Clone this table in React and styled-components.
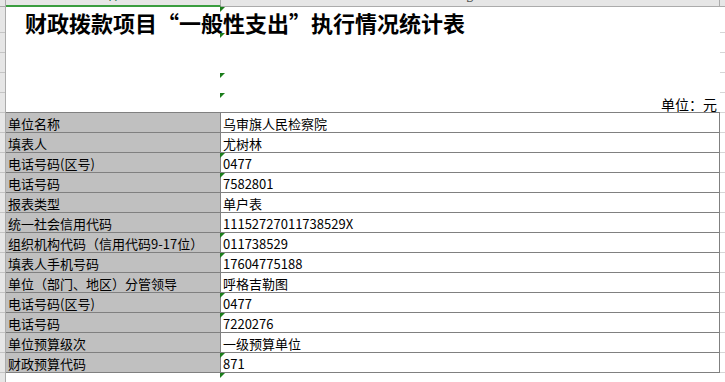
import React from 'react'
import styled, { createGlobalStyle } from 'styled-components'

const GlobalStyle = createGlobalStyle`
  html, body {
    margin: 0;
    padding: 0;
    background: #fff;
  }
  body {
    font-family: "Noto Sans CJK SC", "Liberation Sans", sans-serif;
  }
`

const Sheet = styled.div`
  width: 725px;
  height: 382px;
  overflow: hidden;
  display: flex;
  flex-direction: column;
  background: #fff;
`

const ColumnBar = styled.div`
  display: flex;
  height: 7px;
  flex: none;
`

const Corner = styled.div`
  width: 6px;
  box-sizing: border-box;
  background: #e6e6e6;
  border-right: 1px solid #ababab;
  border-bottom: 1px solid #ababab;
`

const ColHead = styled.div`
  width: ${p => p.$w}px;
  flex: none;
  box-sizing: border-box;
  background: #e6e6e6;
  border-bottom: ${p => (p.$active ? '2px solid #3a9d3f' : '1px solid #ababab')};
  border-right: ${p => (p.$last ? 'none' : '1px solid #ababab')};
  display: flex;
  justify-content: center;
  align-items: flex-end;
  padding-bottom: 2px;
  overflow: hidden;
  font: 11px/11px "Liberation Sans", sans-serif;
  color: ${p => (p.$active ? '#217346' : '#555')};
`

const Body = styled.div`
  display: flex;
  flex: 1;
  min-height: 0;
`

const RowHeaders = styled.div`
  width: 6px;
  flex: none;
  box-sizing: border-box;
  display: flex;
  flex-direction: column;
  background: #e6e6e6;
  border-right: 1px solid #ababab;
`

const Gutter = styled.div`
  width: 5px;
  flex: none;
  display: flex;
  flex-direction: column;
`

const Tick = styled.div`
  height: ${p => p.$h}px;
  flex: none;
  box-sizing: border-box;
  border-bottom: 1px solid ${p => p.$color};
`

const Main = styled.div`
  width: 714px;
  flex: none;
  display: flex;
  flex-direction: column;
`

const TitleBlock = styled.div`
  position: relative;
  height: 106px;
  flex: none;
  box-sizing: border-box;
  border-bottom: 1px solid #808080;
  display: flex;
  flex-direction: column;
  justify-content: space-between;
  padding: 4px 3px 1px 19px;
`

const Title = styled.h1`
  margin: 0;
  font-size: 22px;
  line-height: 22px;
  font-weight: 700;
  color: #000;
  white-space: nowrap;
`

const Unit = styled.div`
  align-self: flex-end;
  font-size: 14px;
  line-height: 14px;
  color: #000;
`

const Table = styled.div`
  display: grid;
  grid-template-columns: 215px 499px;
`

const Cell = styled.div`
  position: relative;
  height: 20px;
  box-sizing: border-box;
  border-right: 1px solid #808080;
  border-bottom: 1px solid #808080;
  background: ${p => (p.$label ? '#c0c0c0' : '#fff')};
  padding: 2px 0 0 2px;
  font-size: 13px;
  line-height: 17px;
  white-space: nowrap;
  color: #000;
`

const Marker = styled.span`
  position: absolute;
  top: ${p => p.$top || 0}px;
  left: ${p => p.$left ?? -1}px;
  width: 0;
  height: 0;
  border-top: 5px solid #1b7d1b;
  border-right: 5px solid transparent;
`

const Tail = styled.div`
  position: relative;
  flex: 1;
`

const rows = [
  ['单位名称', '乌审旗人民检察院', false],
  ['填表人', '尤树林', false],
  ['电话号码(区号)', '0477', true],
  ['电话号码', '7582801', true],
  ['报表类型', '单户表', false],
  ['统一社会信用代码', '11152727011738529X', false],
  ['组织机构代码（信用代码9-17位）', '011738529', true],
  ['填表人手机号码', '17604775188', true],
  ['单位（部门、地区）分管领导', '呼格吉勒图', false],
  ['电话号码(区号)', '0477', true],
  ['电话号码', '7220276', true],
  ['单位预算级次', '一级预算单位', false],
  ['财政预算代码', '871', true],
]

// sheet row heights (incl. gridline) below the column bar
const rowHeights = [26, 20, 20, 20, 20, ...rows.map(() => 20), 20]

const App = () => {
  return (
    <Sheet>
      <GlobalStyle />
      <ColumnBar>
        <Corner />
        <ColHead $w={215} $active>A</ColHead>
        <ColHead $w={499}>B</ColHead>
        <ColHead $w={5} $last />
      </ColumnBar>
      <Body>
        <RowHeaders>
          {rowHeights.map((h, i) => (
            <Tick key={i} $h={h} $color="#c4c4c4" />
          ))}
        </RowHeaders>
        <Main>
          <TitleBlock>
            <Title>财政拨款项目“一般性支出”执行情况统计表</Title>
            <Unit>单位：元</Unit>
            {[0, 26, 66, 86].map(t => (
              <Marker key={t} $top={t} $left={214} />
            ))}
          </TitleBlock>
          <Table>
            {rows.map(([label, value, flag], i) => (
              <React.Fragment key={i}>
                <Cell $label>{label}</Cell>
                <Cell>
                  {flag && <Marker />}
                  {value}
                </Cell>
              </React.Fragment>
            ))}
          </Table>
          <Tail>
            <Marker $left={214} />
          </Tail>
        </Main>
        <Gutter>
          {rowHeights.map((h, i) => (
            <Tick key={i} $h={h} $color="#d6d6d6" />
          ))}
        </Gutter>
      </Body>
    </Sheet>
  )
}

export default App
